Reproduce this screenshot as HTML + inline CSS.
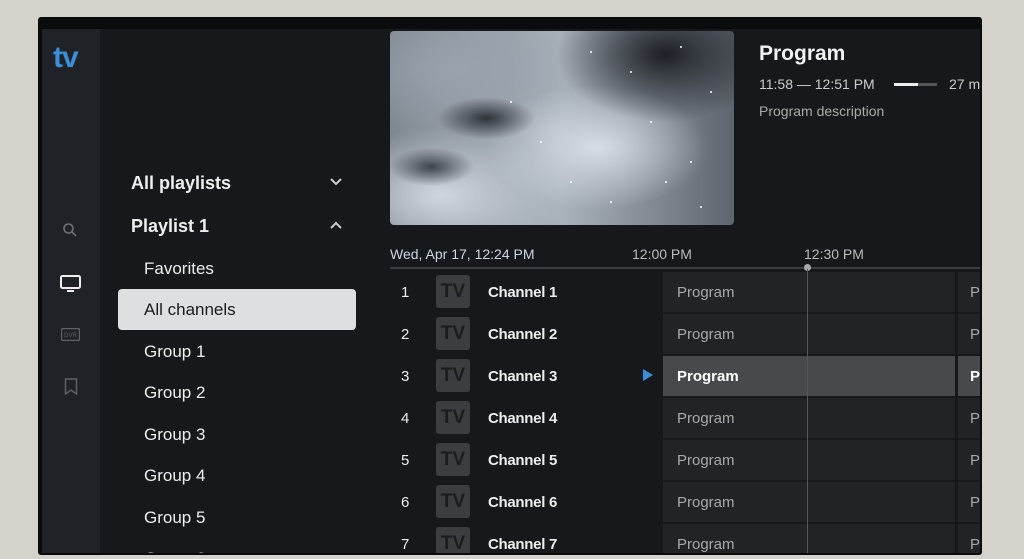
<!DOCTYPE html>
<html><head><style>
*{margin:0;padding:0;box-sizing:border-box}
body{width:1024px;height:559px;overflow:hidden;background:#d5d2cb;font-family:"Liberation Sans",sans-serif;position:relative}
.tv{position:absolute;left:38px;top:17px;width:944px;height:538px;background:#0a0b0c;border-radius:3px}
.scr{position:absolute;left:42px;top:29px;width:938px;height:524px;background:#16181c;overflow:hidden}
.rail{position:absolute;left:0;top:0;width:58px;height:524px;background:#1f2226}
.a{position:absolute;white-space:nowrap}
.menu{color:#eee;font-size:17px}
.sel{position:absolute;left:76px;top:260px;width:238px;height:41px;background:#dedfe0;border-radius:4px}
.vid{position:absolute;left:348px;top:2px;width:344px;height:194px;border-radius:4px;overflow:hidden;
background:radial-gradient(ellipse at 80% 12%,#1d2026 0,transparent 28%),radial-gradient(ellipse at 28% 45%,#2f333a 0,transparent 14%),radial-gradient(ellipse at 12% 70%,#3d424a 0,transparent 10%),radial-gradient(ellipse at 60% 60%,#d6dde6 0,transparent 38%),radial-gradient(ellipse at 15% 85%,#d0d7e0 0,transparent 30%),radial-gradient(ellipse at 20% 20%,#9aa2ad 0,transparent 35%),linear-gradient(90deg,#7c848e,#aab2bc 50%,#5f656e)}
.vid i{position:absolute;width:2px;height:2px;background:#fff;border-radius:50%}
.row{position:absolute;left:348px;width:600px;height:42px;color:#eee;font-size:15px}
.row>.a:nth-child(3){font-weight:bold;letter-spacing:-0.3px}
.cell{position:absolute;left:273px;top:1px;width:292px;height:40px;background:#212327;color:#a8a9ab;padding:12px 0 0 14px}
.cell2{position:absolute;left:568px;top:1px;width:40px;height:40px;background:#212327;color:#a8a9ab;padding:12px 0 0 12px}
.logo{position:absolute;left:46px;top:4px;width:34px;height:33px;background:#3b3d40;border-radius:3px;color:#1b1c1e;font-weight:bold;font-size:19px;text-align:center;line-height:33px}
</style></head><body>
<div class="tv"></div>
<div class="scr">
<div class="rail"></div>
<div class="a" style="left:11px;top:12px;color:#3a8fd8;font-size:30px;font-weight:bold;letter-spacing:-1px">tv</div>
<svg class="a" style="left:20px;top:193px" width="16" height="16" viewBox="0 0 16 16" fill="none" stroke="#6e7074" stroke-width="1.6"><circle cx="6.5" cy="6.5" r="4.5"/><path d="M10 10l4 4"/></svg>
<svg class="a" style="left:18px;top:246px" width="21" height="17" viewBox="0 0 21 17" fill="none" stroke="#eee" stroke-width="2"><rect x="1" y="1" width="19" height="12" rx="1.5"/><path d="M7 16h7"/></svg>
<svg class="a" style="left:19px;top:299px" width="19" height="13" viewBox="0 0 19 13" fill="none" stroke="#5f6165" stroke-width="1.2"><rect x="0.6" y="0.6" width="17.8" height="11.8" rx="1"/><text x="9.5" y="9" font-size="6" fill="#5f6165" stroke="none" text-anchor="middle" font-family="Liberation Sans">DVR</text></svg>
<svg class="a" style="left:22px;top:349px" width="14" height="17" viewBox="0 0 14 17" fill="none" stroke="#5f6165" stroke-width="1.5"><path d="M1.5 1h11v15l-5.5-4-5.5 4z"/></svg>
<div class="a menu" style="left:89px;top:144px;font-weight:bold;font-size:18px">All playlists</div>
<svg class="a" style="left:287px;top:148px" width="14" height="10" viewBox="0 0 14 10" fill="none" stroke="#ccc" stroke-width="2"><path d="M2 2l5 5 5-5"/></svg>
<div class="a menu" style="left:89px;top:187px;font-weight:bold;font-size:18px">Playlist 1</div>
<svg class="a" style="left:287px;top:191px" width="14" height="10" viewBox="0 0 14 10" fill="none" stroke="#ccc" stroke-width="2"><path d="M2 8l5-5 5 5"/></svg>
<div class="a menu" style="left:102px;top:230px">Favorites</div>
<div class="sel"></div>
<div class="a menu" style="left:102px;top:271px;color:#1a1b1d">All channels</div>
<div class="a menu" style="left:102px;top:313px">Group 1</div>
<div class="a menu" style="left:102px;top:354px">Group 2</div>
<div class="a menu" style="left:102px;top:396px">Group 3</div>
<div class="a menu" style="left:102px;top:437px">Group 4</div>
<div class="a menu" style="left:102px;top:479px">Group 5</div>
<div class="a menu" style="left:102px;top:520px">Group 6</div>
<div class="vid"><i style="left:200px;top:20px"></i><i style="left:240px;top:40px"></i><i style="left:290px;top:15px"></i><i style="left:320px;top:60px"></i><i style="left:260px;top:90px"></i><i style="left:300px;top:130px"></i><i style="left:180px;top:150px"></i><i style="left:120px;top:70px"></i><i style="left:220px;top:170px"></i><i style="left:310px;top:175px"></i><i style="left:150px;top:110px"></i><i style="left:275px;top:150px"></i></div>
<div class="a" style="left:717px;top:13px;color:#f2f2f2;font-size:21px;font-weight:bold">Program</div>
<div class="a" style="left:717px;top:47px;color:#ccc;font-size:14px">11:58 — 12:51 PM</div>
<div class="a" style="left:852px;top:54px;width:43px;height:3px;background:#555"><div style="width:24px;height:3px;background:#eee"></div></div>
<div class="a" style="left:907px;top:47px;color:#ccc;font-size:14px">27 m</div>
<div class="a" style="left:717px;top:74px;color:#aaa;font-size:14px">Program description</div>
<div class="a" style="left:348px;top:217px;color:#cdd6e2;font-size:14px">Wed, Apr 17, 12:24 PM</div>
<div class="a" style="left:590px;top:217px;color:#bbb;font-size:14px">12:00 PM</div>
<div class="a" style="left:762px;top:217px;color:#bbb;font-size:14px">12:30 PM</div>
<div class="a" style="left:348px;top:238px;width:590px;height:2px;background:#3a3c40"></div>
<div class="a" style="left:762px;top:235px;width:7px;height:7px;border-radius:50%;background:#aaa"></div>
<div class="a" style="left:765px;top:240px;width:1px;height:290px;background:#55575b;z-index:3"></div>

<div class="row" style="top:242px"><div class="a" style="left:11px;top:13px">1</div><div class="logo">TV</div><div class="a" style="left:98px;top:13px">Channel 1</div><div class="cell">Program</div><div class="cell2">P</div></div>
<div class="row" style="top:284px"><div class="a" style="left:11px;top:13px">2</div><div class="logo">TV</div><div class="a" style="left:98px;top:13px">Channel 2</div><div class="cell">Program</div><div class="cell2">P</div></div>
<div class="row" style="top:326px"><div class="a" style="left:11px;top:13px">3</div><div class="logo">TV</div><div class="a" style="left:98px;top:13px">Channel 3</div><div class="a" style="left:253px;top:14px;width:0;height:0;border-left:10px solid #3a8fd8;border-top:6px solid transparent;border-bottom:6px solid transparent"></div><div class="cell" style="background:#48494c;color:#fff;font-weight:bold">Program</div><div class="cell2" style="background:#48494c;color:#fff;font-weight:bold">P</div></div>
<div class="row" style="top:368px"><div class="a" style="left:11px;top:13px">4</div><div class="logo">TV</div><div class="a" style="left:98px;top:13px">Channel 4</div><div class="cell">Program</div><div class="cell2">P</div></div>
<div class="row" style="top:410px"><div class="a" style="left:11px;top:13px">5</div><div class="logo">TV</div><div class="a" style="left:98px;top:13px">Channel 5</div><div class="cell">Program</div><div class="cell2">P</div></div>
<div class="row" style="top:452px"><div class="a" style="left:11px;top:13px">6</div><div class="logo">TV</div><div class="a" style="left:98px;top:13px">Channel 6</div><div class="cell">Program</div><div class="cell2">P</div></div>
<div class="row" style="top:494px"><div class="a" style="left:11px;top:13px">7</div><div class="logo">TV</div><div class="a" style="left:98px;top:13px">Channel 7</div><div class="cell">Program</div><div class="cell2">P</div></div>
</div>
</body></html>
